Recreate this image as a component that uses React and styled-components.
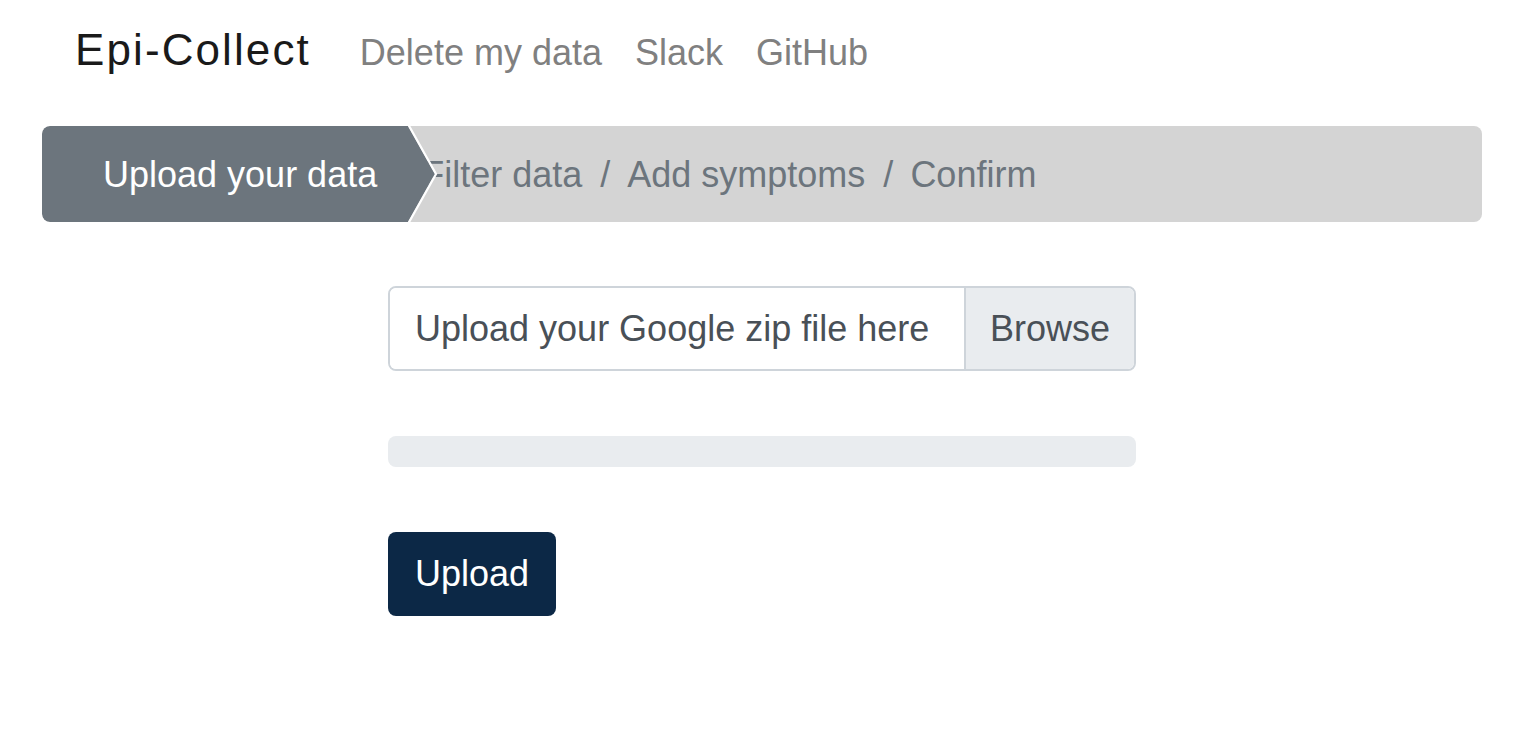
import React from "react";
import styled, { createGlobalStyle } from "styled-components";

const Global = createGlobalStyle`
  html, body { margin: 0; padding: 0; background: #fff; }
  body { font-family: "Liberation Sans", Arial, sans-serif; color: #212529; }
  * { box-sizing: border-box; }
`;

const Page = styled.div`
  padding: 0 46px 0 42px;
`;

const Navbar = styled.nav`
  display: flex;
  align-items: baseline;
  padding: 23px 0 0 33px;
  height: 126px;
`;

const Brand = styled.a`
  font-size: 44px;
  letter-spacing: 2.1px;
  line-height: 54px;
  color: #1a1a1a;
  text-decoration: none;
  margin-right: 49px;
`;

const NavLinks = styled.div`
  display: flex;
  gap: 33px;
`;

const NavLink = styled.a`
  font-size: 36px;
  line-height: 54px;
  color: #808080;
  text-decoration: none;
`;

const Crumbs = styled.ol`
  display: flex;
  align-items: center;
  height: 96px;
  margin: 0;
  padding: 0;
  list-style: none;
  background: #d4d4d4;
  border-radius: 8px;
  overflow: hidden;
  font-size: 36px;
`;

const ActiveStep = styled.li`
  position: relative;
  z-index: 1;
  display: flex;
  align-items: center;
  height: 100%;
  padding: 1px 31px 0 61px;
  background: #6c757d;
  color: #fff;
  border-radius: 8px 0 0 8px;
`;

const Arrow = styled.svg`
  position: absolute;
  top: 0;
  left: 100%;
  width: 32px;
  height: 96px;
  overflow: visible;
`;

const Step = styled.li`
  color: #6c757d;
  padding-top: 1px;
  margin-left: ${(p) => (p.$first ? "14px" : "0")};
  &:not(:nth-child(2))::before {
    content: "/";
    padding: 0 17px 0 18px;
  }
`;

const Form = styled.div`
  width: 748px;
  margin: 64px auto 0;
`;

const FileInput = styled.label`
  display: flex;
  height: 85px;
  border: 2px solid #ced4da;
  border-radius: 8px;
  overflow: hidden;
  font-size: 36px;
  color: #495057;
  cursor: pointer;
`;

const FileLabel = styled.span`
  flex: 1;
  display: flex;
  align-items: center;
  padding: 0 25px;
  background: #fff;
`;

const BrowseButton = styled.span`
  display: flex;
  align-items: center;
  padding: 0 24px;
  background: #e9ecef;
  border-left: 2px solid #ced4da;
`;

const Progress = styled.div`
  height: 31px;
  margin-top: 65px;
  background: #e9ecef;
  border-radius: 8px;
`;

const UploadButton = styled.button`
  display: block;
  height: 84px;
  margin-top: 65px;
  padding: 0 27px;
  border: none;
  border-radius: 8px;
  background: #0c2846;
  color: #fff;
  font-family: "Liberation Sans", Arial, sans-serif;
  font-size: 36px;
  cursor: pointer;
`;

export default function App() {
  return (
    <>
      <Global />
      <Page>
        <Navbar>
          <Brand href="#">Epi-Collect</Brand>
          <NavLinks>
            <NavLink href="#">Delete my data</NavLink>
            <NavLink href="#">Slack</NavLink>
            <NavLink href="#">GitHub</NavLink>
          </NavLinks>
        </Navbar>
        <Crumbs>
          <ActiveStep>
            Upload your data
            <Arrow viewBox="0 0 32 96">
              <polygon points="0,0 27,48 0,96" fill="#6c757d" />
              <polyline
                points="0,-2 28,48 0,98"
                fill="none"
                stroke="#fff"
                strokeWidth="2.2"
              />
            </Arrow>
          </ActiveStep>
          <Step $first>Filter data</Step>
          <Step>Add symptoms</Step>
          <Step>Confirm</Step>
        </Crumbs>
        <Form>
          <FileInput>
            <FileLabel>Upload your Google zip file here</FileLabel>
            <BrowseButton>Browse</BrowseButton>
          </FileInput>
          <Progress />
          <UploadButton>Upload</UploadButton>
        </Form>
      </Page>
    </>
  );
}
